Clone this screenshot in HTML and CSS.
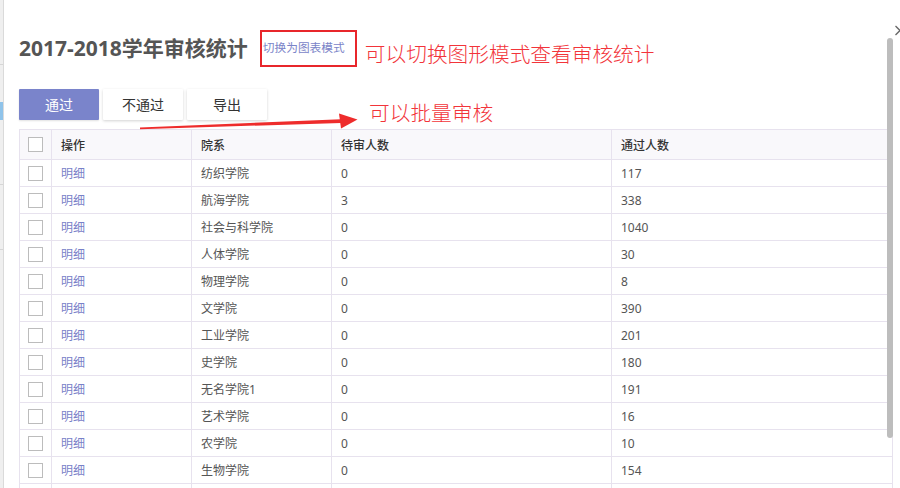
FILE: index.html
```html
<!DOCTYPE html>
<html lang="zh-CN">
<head>
<meta charset="utf-8">
<title>2017-2018学年审核统计</title>
<link rel="stylesheet" href="styles.css">
</head>
<body>
<div class="page">
  <div class="bg-strip">
    <div class="bg-line"></div>
    <div class="bg-blue"></div>
    <div class="bg-line"></div>
    <div class="bg-line"></div>
  </div>
  <div class="dialog">
    <div class="head">
      <h1 class="title">2017-2018学年审核统计</h1>
      <a class="switch">切换为图表模式</a>
      <span class="note note-top">可以切换图形模式查看审核统计</span>
    </div>
    <div class="toolbar">
      <button class="btn btn-primary">通过</button>
      <button class="btn">不通过</button>
      <button class="btn">导出</button>
      <span class="note note-batch">可以批量审核</span>
    </div>
    <div class="tbl">
      <div class="tr th">
        <div class="td c-check"><span class="cb"></span></div>
        <div class="td">操作</div>
        <div class="td">院系</div>
        <div class="td">待审人数</div>
        <div class="td">通过人数</div>
      </div>
      <div class="tr"><div class="td c-check"><span class="cb"></span></div><div class="td"><a class="lnk">明细</a></div><div class="td">纺织学院</div><div class="td">0</div><div class="td">117</div></div>
      <div class="tr"><div class="td c-check"><span class="cb"></span></div><div class="td"><a class="lnk">明细</a></div><div class="td">航海学院</div><div class="td">3</div><div class="td">338</div></div>
      <div class="tr"><div class="td c-check"><span class="cb"></span></div><div class="td"><a class="lnk">明细</a></div><div class="td">社会与科学院</div><div class="td">0</div><div class="td">1040</div></div>
      <div class="tr"><div class="td c-check"><span class="cb"></span></div><div class="td"><a class="lnk">明细</a></div><div class="td">人体学院</div><div class="td">0</div><div class="td">30</div></div>
      <div class="tr"><div class="td c-check"><span class="cb"></span></div><div class="td"><a class="lnk">明细</a></div><div class="td">物理学院</div><div class="td">0</div><div class="td">8</div></div>
      <div class="tr"><div class="td c-check"><span class="cb"></span></div><div class="td"><a class="lnk">明细</a></div><div class="td">文学院</div><div class="td">0</div><div class="td">390</div></div>
      <div class="tr"><div class="td c-check"><span class="cb"></span></div><div class="td"><a class="lnk">明细</a></div><div class="td">工业学院</div><div class="td">0</div><div class="td">201</div></div>
      <div class="tr"><div class="td c-check"><span class="cb"></span></div><div class="td"><a class="lnk">明细</a></div><div class="td">史学院</div><div class="td">0</div><div class="td">180</div></div>
      <div class="tr"><div class="td c-check"><span class="cb"></span></div><div class="td"><a class="lnk">明细</a></div><div class="td">无名学院1</div><div class="td">0</div><div class="td">191</div></div>
      <div class="tr"><div class="td c-check"><span class="cb"></span></div><div class="td"><a class="lnk">明细</a></div><div class="td">艺术学院</div><div class="td">0</div><div class="td">16</div></div>
      <div class="tr"><div class="td c-check"><span class="cb"></span></div><div class="td"><a class="lnk">明细</a></div><div class="td">农学院</div><div class="td">0</div><div class="td">10</div></div>
      <div class="tr"><div class="td c-check"><span class="cb"></span></div><div class="td"><a class="lnk">明细</a></div><div class="td">生物学院</div><div class="td">0</div><div class="td">154</div></div>
      <div class="tr"><div class="td c-check"></div><div class="td"></div><div class="td"></div><div class="td"></div><div class="td"></div></div>
    </div>
  </div>
  <svg class="overlay" width="900" height="488" viewBox="0 0 900 488">
    <polygon points="140,127.6 341,119.2 341,122.9 140,129.3" fill="#ee2c2c"/>
    <polygon points="339,113.5 357.5,119.6 341,128.6" fill="#ee2c2c"/>
    <line x1="895.5" y1="26" x2="904.5" y2="35" stroke="#666" stroke-width="1.3"/>
    <line x1="904.5" y1="26" x2="895.5" y2="35" stroke="#666" stroke-width="1.3"/>
  </svg>
  <div class="scroll-thumb"></div>
</div>
</body>
</html>
```

FILE: styles.css
```css
html, body {
  margin: 0;
  padding: 0;
}
body {
  width: 900px;
  height: 488px;
  overflow: hidden;
  background: #fff;
  font-family: "Noto Sans", "Noto Sans CJK SC", sans-serif;
  color: #555;
}
.page {
  position: relative;
  display: flex;
  width: 900px;
  height: 488px;
  overflow: hidden;
}
.bg-strip {
  width: 3px;
  flex: none;
  background: #efefef;
  border-right: 1px solid #dadada;
  display: flex;
  flex-direction: column;
}
.bg-line {
  height: 1px;
  background: #d6d6d6;
  margin-top: 64px;
}
.bg-blue {
  height: 18px;
  margin-top: 37px;
  background: #8fc3ea;
}
.dialog {
  flex: 1;
  background: #fff;
  padding-left: 15px;
  box-sizing: border-box;
  overflow: hidden;
}
.head {
  display: flex;
  align-items: flex-start;
  padding-top: 30px;
  height: 37px;
}
.title {
  margin: 0;
  font-family: "Noto Sans", "Noto Sans CJK SC", sans-serif;
  font-size: 21px;
  font-weight: 700;
  line-height: 37px;
  color: #555;
  white-space: nowrap;
}
.switch {
  display: block;
  box-sizing: border-box;
  width: 97px;
  height: 37px;
  margin-left: 12px;
  padding: 6px 0 0 1px;
  border: 2px solid #e8262b;
  font-family: "Noto Sans CJK SC", sans-serif;
  font-size: 11.7px;
  line-height: 17px;
  color: #7b84c8;
  white-space: nowrap;
}
.note {
  font-family: "Noto Sans CJK SC", sans-serif;
  font-weight: 300;
  font-size: 20.7px;
  line-height: 21px;
  color: #f2343a;
  white-space: nowrap;
}
.note-top {
  margin-left: 8px;
  margin-top: 13px;
}
.toolbar {
  display: flex;
  align-items: flex-start;
  gap: 4px;
  height: 31px;
  margin-top: 22px;
}
.btn {
  width: 80px;
  height: 31px;
  padding: 0;
  border: none;
  border-radius: 1px;
  background: #fff;
  color: #333;
  font-family: "Noto Sans CJK SC", sans-serif;
  font-size: 14px;
  line-height: 31px;
  box-shadow: 0 1px 3px rgba(0, 0, 0, 0.18);
}
.btn-primary {
  background: #7a84cb;
  color: #fff;
  box-shadow: 0 1px 2px rgba(0, 0, 0, 0.12);
}
.note-batch {
  margin-left: 98px;
  margin-top: 13px;
}
.tbl {
  width: 874px;
  margin-top: 9px;
  border-top: 1px solid #e7e2ee;
  border-left: 1px solid #e7e2ee;
  box-sizing: border-box;
}
.tr {
  display: grid;
  grid-template-columns: 32px 140px 140px 280px 281px;
  height: 27px;
  box-sizing: border-box;
  border-bottom: 1px solid #e7e2ee;
}
.th {
  height: 30px;
  background: #f9f8fb;
}
.td {
  box-sizing: border-box;
  border-right: 1px solid #e7e2ee;
  padding-left: 9px;
  display: flex;
  align-items: center;
  font-family: "Noto Sans", "Noto Sans CJK SC", sans-serif;
  font-size: 12px;
  color: #555;
  white-space: nowrap;
  overflow: hidden;
}
.th .td {
  color: #333;
  font-weight: 500;
}
.td.c-check {
  padding-left: 0;
  justify-content: center;
}
.cb {
  display: block;
  width: 15px;
  height: 15px;
  box-sizing: border-box;
  border: 1px solid #bcbcbc;
  background: #fff;
}
.lnk {
  color: #7880c8;
}
.overlay {
  position: absolute;
  left: 0;
  top: 0;
  pointer-events: none;
}
.scroll-thumb {
  position: absolute;
  left: 887px;
  top: 38px;
  width: 6px;
  height: 400px;
  border-radius: 3px;
  background: #bdbdbd;
}
```
